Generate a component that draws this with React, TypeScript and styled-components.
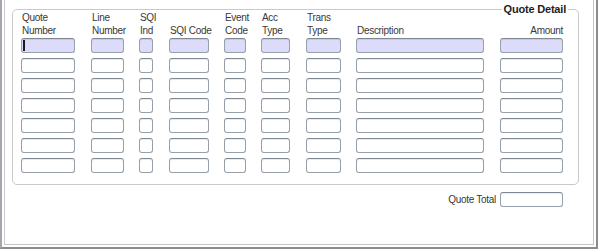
import React from 'react';
import styled, { createGlobalStyle } from 'styled-components';

const GlobalStyle = createGlobalStyle`
  html, body {
    margin: 0;
    padding: 0;
    background: #ffffff;
  }
  body {
    font-family: "Liberation Sans", Arial, sans-serif;
  }
`;

// track widths (start of next column - start of this one) and field widths
const columns = [
  { key: 'quote', top: 'Quote', bottom: 'Number', track: 70, width: 54 },
  { key: 'line', top: 'Line', bottom: 'Number', track: 48, width: 33 },
  { key: 'sqiInd', top: 'SQI', bottom: 'Ind', track: 30, width: 14 },
  { key: 'sqiCode', top: '', bottom: 'SQI Code', track: 55, width: 40 },
  { key: 'event', top: 'Event', bottom: 'Code', track: 37, width: 22 },
  { key: 'acc', top: 'Acc', bottom: 'Type', track: 45, width: 29 },
  { key: 'trans', top: 'Trans', bottom: 'Type', track: 50, width: 35 },
  { key: 'desc', top: '', bottom: 'Description', track: 144, width: 128 },
  { key: 'amount', top: '', bottom: 'Amount', track: 63, width: 63, right: true },
];

const template = columns.map((c) => `${c.track}px`).join(' ');
const ROWS = 7;

const Frame = styled.div`
  box-sizing: border-box;
  width: 598px;
  height: 249px;
  border-left: 2px solid #a6a6ae;
  border-right: 2px solid #8c8c8c;
  border-bottom: 2px solid #8c8c8c;
  box-shadow: inset 2px 0 #fff, inset -2px 0 #fff, inset 0 -2px #fff,
    inset 3px 0 #cacaca, inset -3px 0 #c4c4c4, inset 0 -3px #c4c4c4;
  padding-top: 9px;
  display: flex;
  flex-direction: column;
`;

const Group = styled.div`
  position: relative;
  margin-left: 10px;
  width: 567px;
  box-sizing: border-box;
  border: 1px solid #c9c9c9;
  border-radius: 5px;
  padding: 1px 0 11px 8px;
`;

const GroupTitle = styled.div`
  position: absolute;
  top: -7px;
  right: 10px;
  padding: 0 2px;
  background: #fff;
  font-size: 11px;
  font-weight: bold;
  letter-spacing: -0.2px;
  line-height: 13px;
  color: #1e1e1e;
`;

const HeaderRow = styled.div`
  display: grid;
  grid-template-columns: ${template};
  height: 26px;
  margin-bottom: 1px;
`;

const HeaderCell = styled.div<{ $right?: boolean }>`
  display: flex;
  flex-direction: column;
  justify-content: flex-end;
  align-items: ${(p) => (p.$right ? 'flex-end' : 'flex-start')};
  padding-left: ${(p) => (p.$right ? 0 : 1)}px;
  font-size: 10px;
  letter-spacing: -0.3px;
  line-height: 13px;
  color: #383838;
  white-space: nowrap;
`;

const Rows = styled.div`
  display: flex;
  flex-direction: column;
  gap: 5px;
`;

const Row = styled.div`
  display: grid;
  grid-template-columns: ${template};
`;

const Field = styled.div<{ $w: number; $active?: boolean }>`
  position: relative;
  box-sizing: border-box;
  width: ${(p) => p.$w}px;
  height: 15px;
  border: 1px solid #96a0aa;
  border-top-color: #7e8893;
  border-radius: 3px;
  background: ${(p) => (p.$active ? '#dcdcfa' : '#ffffff')};
  box-shadow: inset 0 1px 0 ${(p) => (p.$active ? '#c8c8e6' : '#ececec')};
`;

const Caret = styled.span`
  position: absolute;
  left: 1px;
  top: 1px;
  width: 2px;
  height: 11px;
  background: #1a1a1a;
`;

const TotalRow = styled.div`
  margin: 7px 0 0 10px;
  width: 567px;
  box-sizing: border-box;
  padding-right: 16px;
  display: flex;
  justify-content: flex-end;
  align-items: center;
  gap: 4px;
`;

const TotalLabel = styled.span`
  font-size: 10px;
  letter-spacing: -0.3px;
  color: #383838;
`;

const App = () => {
  return (
    <>
      <GlobalStyle />
      <Frame>
        <Group>
          <GroupTitle>Quote Detail</GroupTitle>
          <HeaderRow>
            {columns.map((c) => (
              <HeaderCell key={c.key} $right={c.right}>
                {c.top && <span>{c.top}</span>}
                <span>{c.bottom}</span>
              </HeaderCell>
            ))}
          </HeaderRow>
          <Rows>
            {Array.from({ length: ROWS }).map((_, r) => (
              <Row key={r}>
                {columns.map((c, i) => (
                  <div key={c.key}>
                    <Field $w={c.width} $active={r === 0}>
                      {r === 0 && i === 0 && <Caret />}
                    </Field>
                  </div>
                ))}
              </Row>
            ))}
          </Rows>
        </Group>
        <TotalRow>
          <TotalLabel>Quote Total</TotalLabel>
          <Field $w={63} />
        </TotalRow>
      </Frame>
    </>
  );
};

export default App;
